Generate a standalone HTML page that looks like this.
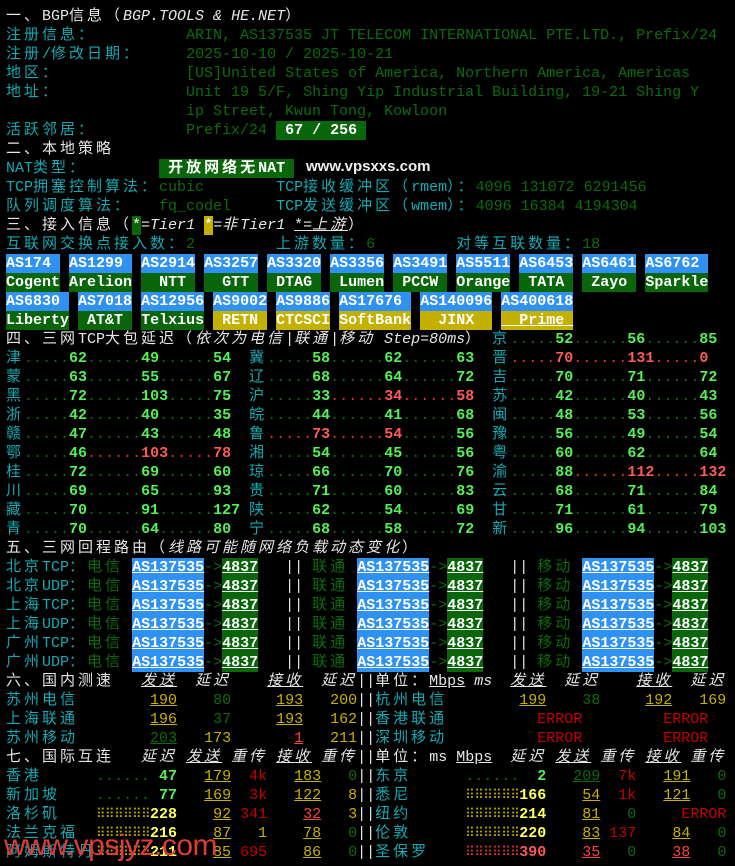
<!DOCTYPE html>
<html><head><meta charset="utf-8"><style>
body{margin:0;background:#000;width:735px;height:866px;overflow:hidden;position:relative;font:15px/19px "Liberation Mono","Noto Sans CJK SC",monospace;color:#e6e6e6}
#t{position:absolute;left:6px;top:7px}
#t>div{height:19px;white-space:pre}
k{letter-spacing:3px}
c{color:#15aab2}
g{color:#0c6c0c}
gu{color:#0c6c0c;text-decoration:underline}
n{color:#55f055;font-weight:bold}
m{color:#ff5a5a;font-weight:bold}
e{color:#0c6c0c}
f{color:#e03030}
o{color:#c8b000;text-decoration:underline}
j{color:#c8b000}
v{color:#ffff60;font-weight:bold}
t{color:#c40000}
l{color:#ff4040;text-decoration:underline}
w{color:#e6e6e6}
sq,sr{display:inline-block;width:54px;height:19px;overflow:hidden;vertical-align:top;white-space:nowrap;font-family:"DejaVu Sans Mono",monospace;font-size:13px;letter-spacing:-0.5px}
sq{color:#b8a400}
sr{color:#e03030}
bx,gx,yx{display:inline-block;height:19px;line-height:19px;vertical-align:top;color:#fff;font-weight:bold;white-space:pre}
bx{background:#2f92f2}gx{background:#0a660a}yx{background:#c4b000}
.u{text-decoration:underline}
.wm{position:absolute;left:306px;top:157px;font:bold 15px/19px "Liberation Sans",sans-serif;color:#f0f0f0}
.wm2{position:absolute;left:4px;top:831px;font:30px/30px "Liberation Sans",sans-serif;color:#e03a3a;letter-spacing:-0.5px}
</style></head><body>
<div id="t">
<div><w><k>一、</k>BGP<k>信息（</k><i>BGP.TOOLS &amp; HE.NET</i><k>）</k></w></div>
<div><c><k>注册信息：</k></c>          <g>ARIN, AS137535 JT TELECOM INTERNATIONAL PTE.LTD., Prefix/24</g></div>
<div><c><k>注册</k>/<k>修改日期：</k></c>     <g>2025-10-10 / 2025-10-21</g></div>
<div><c><k>地区：</k></c>              <g>[US]United States of America, Northern America, Americas</g></div>
<div><c><k>地址：</k></c>              <g>Unit 19 5/F, Shing Yip Industrial Building, 19-21 Shing Y</g></div>
<div>                    <g>ip Street, Kwun Tong, Kowloon</g></div>
<div><c><k>活跃邻居：</k></c>          <g>Prefix/24</g> <gx> 67 / 256 </gx></div>
<div><w><k>二、本地策略</k></w></div>
<div><c>NAT<k>类型：</k></c>        <gx> <k>开放网络无</k>NAT </gx></div>
<div><c>TCP<k>拥塞控制算法：</k></c><g>cubic</g>        <c>TCP<k>接收缓冲区（</k>rmem<k>）：</k></c><g>4096 131072 6291456</g></div>
<div><c><k>队列调度算法：</k></c>   <g>fq_codel</g>     <c>TCP<k>发送缓冲区（</k>wmem<k>）：</k></c><g>4096 16384 4194304</g></div>
<div><w><k>三、接入信息（</k><gx style="font-weight:normal">*</gx><i>=Tier1 </i><yx style="font-weight:normal">*</yx><i>=<k>非</k>Tier1 </i><u>*</u><i><u>=<k>上游</k></u></i><k>）</k></w></div>
<div><c><k>互联网交换点接入数：</k></c><g>2</g>         <c><k>上游数量：</k></c><g>6</g>         <c><k>对等互联数量：</k></c><g>18</g></div>
<div><bx>AS174 </bx> <bx>AS1299 </bx> <bx>AS2914</bx> <bx>AS3257</bx> <bx>AS3320</bx> <bx>AS3356</bx> <bx>AS3491</bx> <bx>AS5511</bx> <bx>AS6453</bx> <bx>AS6461</bx> <bx>AS6762 </bx></div>
<div><gx>Cogent</gx> <gx>Arelion</gx> <gx>  NTT </gx> <gx>  GTT </gx> <gx> DTAG </gx> <gx> Lumen</gx> <gx> PCCW </gx> <gx>Orange</gx> <gx> TATA </gx> <gx> Zayo </gx> <gx>Sparkle</gx></div>
<div><bx>AS6830 </bx> <bx>AS7018</bx> <bx>AS12956</bx> <bx>AS9002</bx> <bx>AS9886</bx> <bx>AS17676 </bx> <bx>AS140096</bx> <bx>AS400618</bx></div>
<div><gx>Liberty</gx> <gx> AT&amp;T </gx> <gx>Telxius</gx> <yx> RETN </yx> <yx>CTCSCI</yx> <yx>SoftBank</yx> <yx>  JINX  </yx> <yx class="u">  Prime </yx></div>
<div><w><k>四、三网</k>TCP<k>大包延迟（</k><i><k>依次为电信</k>|<k>联通</k>|<k>移动</k> Step=80ms</i><k>）</k></w> <c><k>京</k></c><e>.....</e><n>52</n><e>......</e><n>56</n><e>......</e><n>85</n></div>
<div><c><k>津</k></c><e>.....</e><n>62</n><e>......</e><n>49</n><e>......</e><n>54</n>  <c><k>冀</k></c><e>.....</e><n>58</n><e>......</e><n>62</n><e>......</e><n>63</n>  <c><k>晋</k></c><f>.....</f><m>70</m><f>......</f><m>131</m><f>.....</f><m>0</m></div>
<div><c><k>蒙</k></c><e>.....</e><n>63</n><e>......</e><n>55</n><e>......</e><n>67</n>  <c><k>辽</k></c><e>.....</e><n>68</n><e>......</e><n>64</n><e>......</e><n>72</n>  <c><k>吉</k></c><e>.....</e><n>70</n><e>......</e><n>71</n><e>......</e><n>72</n></div>
<div><c><k>黑</k></c><e>.....</e><n>72</n><e>......</e><n>103</n><e>.....</e><n>75</n>  <c><k>沪</k></c><e>.....</e><n>33</n><f>......</f><m>34</m><f>......</f><m>58</m>  <c><k>苏</k></c><e>.....</e><n>42</n><e>......</e><n>40</n><e>......</e><n>43</n></div>
<div><c><k>浙</k></c><e>.....</e><n>42</n><e>......</e><n>40</n><e>......</e><n>35</n>  <c><k>皖</k></c><e>.....</e><n>44</n><e>......</e><n>41</n><e>......</e><n>68</n>  <c><k>闽</k></c><e>.....</e><n>48</n><e>......</e><n>53</n><e>......</e><n>56</n></div>
<div><c><k>赣</k></c><e>.....</e><n>47</n><e>......</e><n>43</n><e>......</e><n>48</n>  <c><k>鲁</k></c><f>.....</f><m>73</m><f>......</f><m>54</m><e>......</e><n>56</n>  <c><k>豫</k></c><e>.....</e><n>56</n><e>......</e><n>49</n><e>......</e><n>54</n></div>
<div><c><k>鄂</k></c><e>.....</e><n>46</n><f>......</f><m>103</m><f>.....</f><m>78</m>  <c><k>湘</k></c><e>.....</e><n>54</n><e>......</e><n>45</n><e>......</e><n>56</n>  <c><k>粤</k></c><e>.....</e><n>60</n><e>......</e><n>62</n><e>......</e><n>64</n></div>
<div><c><k>桂</k></c><e>.....</e><n>72</n><e>......</e><n>69</n><e>......</e><n>60</n>  <c><k>琼</k></c><e>.....</e><n>66</n><e>......</e><n>70</n><e>......</e><n>76</n>  <c><k>渝</k></c><e>.....</e><n>88</n><f>......</f><m>112</m><f>.....</f><m>132</m></div>
<div><c><k>川</k></c><e>.....</e><n>69</n><e>......</e><n>65</n><e>......</e><n>93</n>  <c><k>贵</k></c><e>.....</e><n>71</n><e>......</e><n>60</n><e>......</e><n>83</n>  <c><k>云</k></c><e>.....</e><n>68</n><e>......</e><n>71</n><e>......</e><n>84</n></div>
<div><c><k>藏</k></c><e>.....</e><n>70</n><e>......</e><n>91</n><e>......</e><n>127</n> <c><k>陕</k></c><e>.....</e><n>62</n><e>......</e><n>54</n><e>......</e><n>69</n>  <c><k>甘</k></c><e>.....</e><n>71</n><e>......</e><n>61</n><e>......</e><n>79</n></div>
<div><c><k>青</k></c><e>.....</e><n>70</n><e>......</e><n>64</n><e>......</e><n>80</n>  <c><k>宁</k></c><e>.....</e><n>68</n><e>......</e><n>58</n><e>......</e><n>72</n>  <c><k>新</k></c><e>.....</e><n>96</n><e>......</e><n>94</n><e>......</e><n>103</n></div>
<div><w><k>五、三网回程路由（</k><i><k>线路可能随网络负载动态变化</k></i><k>）</k></w></div>
<div><c><k>北京</k>TCP<k>：</k></c><g><k>电信</k></g> <bx class="u">AS137535</bx><g>-&gt;</g><gx class="u">4837</gx>   <w>||</w> <g><k>联通</k></g> <bx class="u">AS137535</bx><g>-&gt;</g><gx class="u">4837</gx>   <w>||</w> <g><k>移动</k></g> <bx class="u">AS137535</bx><g>-&gt;</g><gx class="u">4837</gx></div>
<div><c><k>北京</k>UDP<k>：</k></c><g><k>电信</k></g> <bx class="u">AS137535</bx><g>-&gt;</g><gx class="u">4837</gx>   <w>||</w> <g><k>联通</k></g> <bx class="u">AS137535</bx><g>-&gt;</g><gx class="u">4837</gx>   <w>||</w> <g><k>移动</k></g> <bx class="u">AS137535</bx><g>-&gt;</g><gx class="u">4837</gx></div>
<div><c><k>上海</k>TCP<k>：</k></c><g><k>电信</k></g> <bx class="u">AS137535</bx><g>-&gt;</g><gx class="u">4837</gx>   <w>||</w> <g><k>联通</k></g> <bx class="u">AS137535</bx><g>-&gt;</g><gx class="u">4837</gx>   <w>||</w> <g><k>移动</k></g> <bx class="u">AS137535</bx><g>-&gt;</g><gx class="u">4837</gx></div>
<div><c><k>上海</k>UDP<k>：</k></c><g><k>电信</k></g> <bx class="u">AS137535</bx><g>-&gt;</g><gx class="u">4837</gx>   <w>||</w> <g><k>联通</k></g> <bx class="u">AS137535</bx><g>-&gt;</g><gx class="u">4837</gx>   <w>||</w> <g><k>移动</k></g> <bx class="u">AS137535</bx><g>-&gt;</g><gx class="u">4837</gx></div>
<div><c><k>广州</k>TCP<k>：</k></c><g><k>电信</k></g> <bx class="u">AS137535</bx><g>-&gt;</g><gx class="u">4837</gx>   <w>||</w> <g><k>联通</k></g> <bx class="u">AS137535</bx><g>-&gt;</g><gx class="u">4837</gx>   <w>||</w> <g><k>移动</k></g> <bx class="u">AS137535</bx><g>-&gt;</g><gx class="u">4837</gx></div>
<div><c><k>广州</k>UDP<k>：</k></c><g><k>电信</k></g> <bx class="u">AS137535</bx><g>-&gt;</g><gx class="u">4837</gx>   <w>||</w> <g><k>联通</k></g> <bx class="u">AS137535</bx><g>-&gt;</g><gx class="u">4837</gx>   <w>||</w> <g><k>移动</k></g> <bx class="u">AS137535</bx><g>-&gt;</g><gx class="u">4837</gx></div>
<div><w><k>六、国内测速</k>   <i><u><k>发送</k></u>  <k>延迟</k>    <u><k>接收</k></u>  <k>延迟</k></i>||<k>单位：</k><u>Mbps</u> <i>ms</i>  <i><u><k>发送</k></u>  <k>延迟</k>    <u><k>接收</k></u>  <k>延迟</k></i></w></div>
<div><c><k>苏州电信</k></c>        <o>190</o>    <g>80</g>     <o>193</o>   <j>200</j><w>||</w><c><k>杭州电信</k></c>        <o>199</o>    <g>38</g>     <o>192</o>   <j>169</j></div>
<div><c><k>上海联通</k></c>        <o>196</o>    <g>37</g>     <o>193</o>   <j>162</j><w>||</w><c><k>香港联通</k></c>          <t>ERROR</t>         <t>ERROR</t></div>
<div><c><k>苏州移动</k></c>        <gu>203</gu>   <j>173</j>       <l>1</l>   <j>211</j><w>||</w><c><k>深圳移动</k></c>          <t>ERROR</t>         <t>ERROR</t></div>
<div><w><k>七、国际互连</k>   <i><k>延迟</k> <u><k>发送</k></u> <k>重传</k> <u><k>接收</k></u> <k>重传</k></i>||<k>单位：</k>ms <u>Mbps</u>  <i><k>延迟</k> <u><k>发送</k></u> <k>重传</k> <u><k>接收</k></u> <k>重传</k></i></w></div>
<div><c><k>香港</k></c>      <e>......</e><n> 47</n>   <o>179</o>  <t>4k</t>   <o>183</o>   <g>0</g><w>||</w><c><k>东京</k></c>      <e>......</e><n>  2</n>   <gu>209</gu>  <t>7k</t>   <o>191</o>   <g>0</g></div>
<div><c><k>新加坡</k></c>    <e>......</e><n> 77</n>   <o>169</o>  <t>3k</t>   <o>122</o>   <j>8</j><w>||</w><c><k>悉尼</k></c>      <sq>⠿⠿⠿⠿⠿⠿</sq><v>166</v>    <o>54</o>  <t>1k</t>   <o>121</o>   <g>0</g></div>
<div><c><k>洛杉矶</k></c>    <sq>⠿⠿⠿⠿⠿⠿</sq><v>228</v>    <o>92</o> <t>341</t>    <l>32</l>   <j>3</j><w>||</w><c><k>纽约</k></c>      <sq>⠿⠿⠿⠿⠿⠿</sq><v>214</v>    <o>81</o>   <g>0</g>     <t>ERROR</t></div>
<div><c><k>法兰克福</k></c>  <sq>⠿⠿⠿⠿⠿⠿</sq><v>216</v>    <o>87</o>   <j>1</j>    <o>78</o>   <g>0</g><w>||</w><c><k>伦敦</k></c>      <sq>⠿⠿⠿⠿⠿⠿</sq><v>220</v>    <o>83</o> <t>137</t>    <o>84</o>   <g>0</g></div>
<div><c><k>阿姆斯特丹</k></c><sq>⠿⠿⠿⠿⠿⠿</sq><v>211</v>    <o>85</o> <t>695</t>    <o>86</o>   <g>0</g><w>||</w><c><k>圣保罗</k></c>    <sr>⠿⠿⠿⠿⠿⠿</sr><m>390</m>    <l>35</l>   <g>0</g>    <l>38</l>   <g>0</g></div>
</div>
<div class="wm">www.vpsxxs.com</div>
<div class="wm2">www.vpsjyz.com</div>
</body></html>
